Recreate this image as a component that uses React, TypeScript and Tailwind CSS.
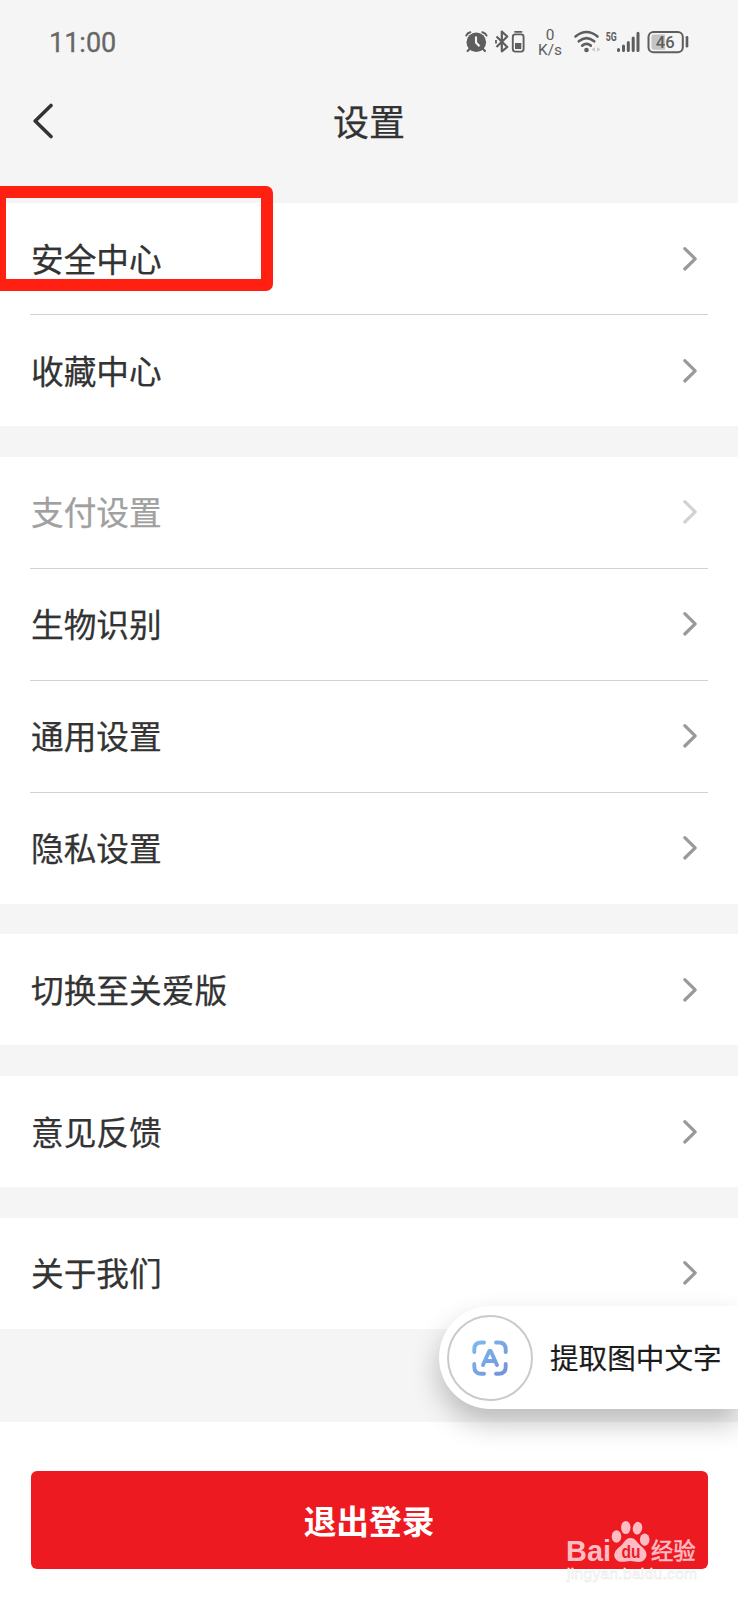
import React from "react";

function Chevron({ faded = false }: { faded?: boolean }) {
  return (
    <svg width="16" height="26" viewBox="0 0 16 26" fill="none" className={faded ? "text-[#d2d2d2]" : "text-[#999999]"}>
      <path d="M2.8 2.6 L13.2 12.8 L2.8 23" stroke="currentColor" strokeWidth="3.2" strokeLinecap="round" strokeLinejoin="round" />
    </svg>
  );
}

function Row({ label, disabled = false, last = false }: { label: string; disabled?: boolean; last?: boolean }) {
  return (
    <div className={"mx-[30px] flex items-center justify-between pr-[10px] " + (last ? "h-[111px]" : "h-[112px] border-b border-[#d2d2d2]")}>
      <span className={"pb-[2px] pl-px text-[32.7px] leading-[48px] [-webkit-text-stroke:0.25px_currentColor] " + (disabled ? "text-[#a0a0a0]" : "text-[#333333]")}>{label}</span>
      <Chevron faded={disabled} />
    </div>
  );
}

function Group({ rows }: { rows: { label: string; disabled?: boolean }[] }) {
  return (
    <section className="bg-white">
      {rows.map((r, i) => (
        <Row key={r.label} label={r.label} disabled={r.disabled} last={i === rows.length - 1} />
      ))}
    </section>
  );
}

function StatusIcons() {
  return (
    <svg width="270" height="65" viewBox="0 0 270 65" className="text-[#5e5e5e]" fill="none" stroke="currentColor">
      <g>
        <circle cx="36.3" cy="32.3" r="9.8" fill="currentColor" stroke="none" />
        <path d="M26.3 25.5 Q27.3 22.8 30.3 22.2 M42.4 22.2 Q45.6 23 46.5 25.5 M29.5 39 L27.6 41 M43 39 L45 41" strokeWidth="2.1" strokeLinecap="round" />
        <path d="M36 26.5 V32.5 L39.5 36.3" stroke="#f5f5f5" strokeWidth="2.1" />
      </g>
      <path d="M56.5 26.5 L67.3 37 L61.8 41.3 V21.7 L67.3 26.5 L56.5 37" strokeWidth="2.2" strokeLinejoin="round" />
      <path d="M56 30 V33.6" strokeWidth="1.8" />
      <rect x="72.8" y="24.4" width="10.8" height="17.2" rx="2.5" strokeWidth="1.9" />
      <path d="M75 21.8 H81.5" strokeWidth="1.8" strokeLinecap="round" />
      <rect x="75" y="33" width="6.3" height="6" fill="currentColor" stroke="none" />
      <g fill="currentColor" stroke="none">
        <text textAnchor="middle" fontFamily="Roboto, sans-serif" fontSize="15.4">
          <tspan x="110" y="30">0</tspan>
          <tspan x="110" y="45">K/s</tspan>
        </text>
        <text x="165.7" y="30.7" fontSize="12.6" textLength="11" lengthAdjust="spacingAndGlyphs" fontWeight="700" fontFamily="Roboto, sans-serif">5G</text>
      </g>
      <path d="M135.5 26.5 Q146.5 17.5 157.5 26.5 M138.8 31.3 Q146.5 24.8 154.2 31.3 M142.2 35.6 Q146.5 32.3 150.8 35.6" strokeWidth="2.6" strokeLinecap="round" />
      <circle cx="146.5" cy="40" r="2.3" fill="currentColor" stroke="none" />
      <path d="M155 37.2 V41.8 L151.5 39.5 Z M157 37.2 V41.8 L160.5 39.5 Z" fill="#c9c9c9" stroke="none" />
      <path d="M178.5 39.5 V40.5 M183.5 36 V40.5 M188.3 32.5 V40.5 M193.2 28 V40.5 M198 23.2 V40.5" strokeWidth="3" strokeLinecap="round" />
      <rect x="208.5" y="22" width="34.3" height="20.2" rx="5" strokeWidth="2" />
      <path d="M214 24.5 H225 V39.7 H214 Q211.5 39.7 211.5 37.2 V27 Q211.5 24.5 214 24.5 Z" fill="#c4c4c4" stroke="none" />
      <path d="M247 27.3 V36.3" strokeWidth="2.6" strokeLinecap="round" />
      <text x="225.3" y="38" textAnchor="middle" fontSize="16.6" fontWeight="500" fontFamily="Roboto, sans-serif" fill="currentColor" stroke="none">46</text>
    </svg>
  );
}

function ExtractButton() {
  return (
    <div className="absolute top-[1306px] right-0 flex h-[103px] w-[299px] items-center rounded-l-full bg-white pl-2 shadow-[0_14px_28px_rgba(0,0,0,0.24)]">
      <div className="flex h-[86px] w-[86px] shrink-0 items-center justify-center rounded-full border-2 border-[#cacaca]">
        <svg width="38" height="38" viewBox="0 0 38 38" fill="none" stroke="url(#scan)" strokeWidth="3.9" strokeLinecap="round" strokeLinejoin="round">
          <defs>
            <linearGradient id="scan" gradientUnits="userSpaceOnUse" x1="4" y1="2" x2="34" y2="36">
              <stop offset="0" stopColor="#7db9ed" />
              <stop offset="1" stopColor="#7193dc" />
            </linearGradient>
          </defs>
          <path d="M3.3 13 V10.5 Q3.3 3.5 10.3 3.5 H13 M25 3.5 H27.7 Q34.7 3.5 34.7 10.5 V13 M34.7 25 V27.7 Q34.7 34.7 27.7 34.7 H25 M13 34.7 H10.3 Q3.3 34.7 3.3 27.7 V25" />
          <path d="M12 26 L18.3 12 H19.7 L26 26 M15.5 22 H22.5" />
        </svg>
      </div>
      <span className="mb-[2px] ml-[17px] whitespace-nowrap text-[28.6px] leading-[40px] text-[#1b1b1b] [-webkit-text-stroke:0.2px_currentColor]">提取图中文字</span>
    </div>
  );
}

function Watermark() {
  return (
    <div className="absolute top-[1518px] left-[564px]">
      <svg width="140" height="68" viewBox="0 0 140 68" fill="#ffbcc3">
        <text x="2" y="43" fontSize="29" textLength="45" lengthAdjust="spacingAndGlyphs" fontWeight="700" fontFamily="Liberation Sans, sans-serif">Bai</text>
        <ellipse cx="52.5" cy="18.5" rx="4.8" ry="6.2" />
        <ellipse cx="61.8" cy="9.5" rx="4.7" ry="6.6" />
        <ellipse cx="73.5" cy="10.2" rx="4.7" ry="6.4" transform="rotate(10 73.5 10.2)" />
        <ellipse cx="80.7" cy="21.7" rx="4.8" ry="6.2" />
        <path d="M66.5 20 C72 20 73 25 77 28 C82 32 84.5 37 80.5 41.5 C76.5 46 71 43 66.5 43 C61 43 57 45.5 52.5 42 C48 37.5 51 32 56 28.5 C60 25.5 61 20 66.5 20 Z" />
        <text x="57.5" y="40" fontSize="19" textLength="19" lengthAdjust="spacingAndGlyphs" fontWeight="700" fontFamily="Liberation Sans, sans-serif" fill="#ed1a23">du</text>
        <text x="87" y="41" fontSize="22.3" textLength="44.5" fontFamily="Noto Sans CJK SC, sans-serif" stroke="#ffbcc3" strokeWidth="0.6">经验</text>
        <text x="3" y="60.5" fontSize="15.5" textLength="130" fontFamily="Liberation Sans, sans-serif" fill="#ffffff" stroke="#e4e4e4" strokeWidth="0.45">jingyan.baidu.com</text>
      </svg>
    </div>
  );
}

export default function App() {
  return (
    <div className="relative flex h-[1600px] w-[738px] flex-col overflow-hidden bg-[#f5f5f5] font-['Noto_Sans_CJK_SC',sans-serif]">
      <header className="flex h-[203px] flex-col">
        <div className="flex h-[75px] justify-between pt-2.5 pr-7 pl-[49px]">
          <span className="pt-[14px] font-['Roboto',sans-serif] text-[27px] leading-[38px] text-[#666666] [-webkit-text-stroke:0.3px_currentColor]">11:00</span>
          <StatusIcons />
        </div>
        <div className="grid grid-cols-3 items-center px-8 pt-[21px]">
          <svg width="22" height="36" viewBox="0 0 22 36" fill="none">
            <path d="M19 2.5 L3.2 18 L19 33.5" stroke="#333333" strokeWidth="3.6" strokeLinecap="round" strokeLinejoin="round" />
          </svg>
          <h1 className="pb-[2px] text-center text-[36px] leading-[48px] text-[#333333] [-webkit-text-stroke:0.25px_currentColor]">设置</h1>
        </div>
      </header>

      <main className="flex flex-col gap-[30.7px]">
        <Group rows={[{ label: "安全中心" }, { label: "收藏中心" }]} />
        <Group rows={[{ label: "支付设置", disabled: true }, { label: "生物识别" }, { label: "通用设置" }, { label: "隐私设置" }]} />
        <Group rows={[{ label: "切换至关爱版" }]} />
        <Group rows={[{ label: "意见反馈" }]} />
        <Group rows={[{ label: "关于我们" }]} />
      </main>

      <footer className="mt-auto h-[178px] bg-white px-[30.5px] pt-[49px]">
        <button className="flex h-[98px] w-full items-center justify-center rounded-md bg-[#ee1a21] pb-px text-[32.7px] leading-[48px] font-bold text-white">退出登录</button>
      </footer>

      <div className="absolute top-[186px] -left-5 h-[105px] w-[293px] rounded-[7px] border-[12px] border-[#ff2012] border-l-[26px]" />
      <ExtractButton />
      <Watermark />
    </div>
  );
}
